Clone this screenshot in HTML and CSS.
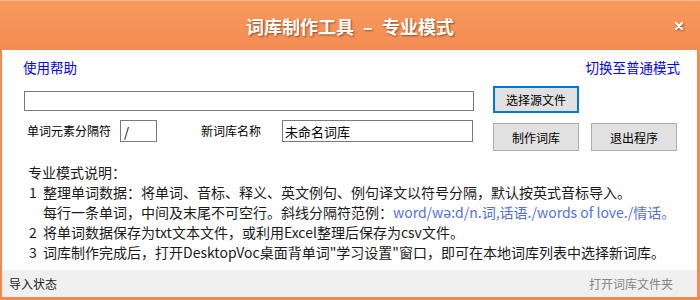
FILE: index.html
```
<!DOCTYPE html>
<html>
<head>
    <meta charset="utf-8">
    <title>词库制作工具</title>
    <link rel="stylesheet" href="styles.css">
</head>
<body>
    <div class="window">
        <div class="titlebar">
            <span></span>
            <h1 class="title">词库制作工具<span class="dash">–</span>专业模式</h1>
            <span class="close">
                <svg width="10" height="10" viewBox="0 0 10 10">
                    <path d="M2 2 L8 8 M8 2 L2 8" stroke="#fff" stroke-width="2.2" stroke-linecap="round"/>
                </svg>
            </span>
        </div>

        <div class="client">
            <div class="main">
                <div class="links">
                    <a href="#">使用帮助</a>
                    <a href="#">切换至普通模式</a>
                </div>

                <div class="form">
                    <div class="fields">
                        <input class="path" type="text">
                        <div class="field-row">
                            <label class="lbl-sep">单词元素分隔符</label>
                            <input class="sep" type="text" value="/">
                            <label class="lbl-name">新词库名称</label>
                            <input class="name" type="text" value="未命名词库">
                        </div>
                    </div>
                    <div class="actions">
                        <button class="btn btn-focus">选择源文件</button>
                        <div class="btn-row">
                            <button class="btn">制作词库</button>
                            <button class="btn">退出程序</button>
                        </div>
                    </div>
                </div>

                <div class="notes">
                    <div class="notes-head">专业模式说明：</div>
                    <div class="note"><span class="num">1</span><span>整理单词数据：将单词、音标、释义、英文例句、例句译文以符号分隔，默认按英式音标导入。</span></div>
                    <div class="note"><span class="num"></span><span>每行一条单词，中间及末尾不可空行。斜线分隔符范例：<span class="sample">word/wə:d/n.词,话语./words of love./情话。</span></span></div>
                    <div class="note"><span class="num">2</span><span>将单词数据保存为txt文本文件，或利用Excel整理后保存为csv文件。</span></div>
                    <div class="note"><span class="num">3</span><span>词库制作完成后，打开DesktopVoc桌面背单词"学习设置"窗口，即可在本地词库列表中选择新词库。</span></div>
                </div>
            </div>

            <div class="statusbar">
                <span>导入状态</span>
                <span class="open-folder">打开词库文件夹</span>
            </div>
        </div>
    </div>
</body>
</html>
```

FILE: styles.css
```
body {
    margin: 0;
    font-family: "Noto Sans CJK SC", "Noto Sans", sans-serif;
}
.window {
    width: 700px;
    height: 300px;
    display: flex;
    flex-direction: column;
    background: #f38a50;
}
.titlebar {
    height: 49px;
    border-top: 1px solid #f9b68c;
    background: linear-gradient(#f89a5d, #f48c52);
    display: grid;
    grid-template-columns: 1fr auto 1fr;
    align-items: center;
}
.title {
    margin: 0;
    font-size: 18px;
    font-weight: bold;
    line-height: 24px;
    color: #fff;
    text-shadow: 1px 1px 2px rgba(80, 30, 0, 0.6);
}
.dash {
    margin: 0 9px;
}
.close {
    justify-self: end;
    padding-right: 16px;
    height: 10px;
    filter: drop-shadow(1px 1px 1px rgba(80, 30, 0, 0.5));
}
.close svg {
    display: block;
}
.client {
    flex: 1;
    margin: 0 3px 3px 2px;
    display: flex;
    flex-direction: column;
    background: #fff;
}
.main {
    flex: 1;
}
.links {
    display: flex;
    justify-content: space-between;
    padding: 8px 17px 0 21px;
    font-size: 13.5px;
    line-height: 18px;
}
.links a {
    color: #0000ff;
    text-decoration: none;
}
.form {
    display: flex;
    margin: 10px 0 0 22px;
    font-size: 12px;
}
.fields {
    width: 450px;
    padding-top: 5px;
}
input {
    box-sizing: border-box;
    border: 1px solid #7a7a7a;
    margin: 0;
    font-family: inherit;
    font-size: 12px;
    color: #000;
    padding: 0 2px;
}
.path {
    display: block;
    width: 450px;
    height: 20px;
}
.field-row {
    display: flex;
    align-items: center;
    margin-top: 9px;
    height: 22px;
    line-height: 16px;
}
.lbl-sep {
    margin-left: 3px;
}
.sep {
    width: 37px;
    height: 22px;
    margin-left: 9px;
    padding-left: 3px;
    font-size: 13px;
}
.lbl-name {
    margin-left: 44px;
}
.name {
    width: 191px;
    height: 22px;
    margin-left: 21px;
    font-size: 13px;
}
.actions {
    margin-left: 19px;
}
.btn {
    box-sizing: border-box;
    width: 86px;
    height: 28px;
    border: 1px solid #adadad;
    background: #e1e1e1;
    font-family: inherit;
    font-size: 12px;
    color: #000;
    padding: 0;
}
.btn-focus {
    display: block;
    height: 27px;
    border: 2px solid #0078d7;
}
.btn-row {
    display: flex;
    gap: 12px;
    margin-top: 10px;
}
.notes {
    margin: 11px 0 0 26px;
    font-size: 14px;
    line-height: 20px;
    color: #1a1a1a;
}
.note {
    display: flex;
}
.num {
    width: 15px;
    flex: none;
    padding-left: 1px;
    box-sizing: border-box;
}
.sample {
    color: #5470e0;
}
.statusbar {
    height: 27px;
    display: flex;
    align-items: center;
    justify-content: space-between;
    padding: 0 24px 0 7px;
    background: #f0f0f0;
    font-size: 12px;
    color: #222;
}
.open-folder {
    color: #858585;
}
```
